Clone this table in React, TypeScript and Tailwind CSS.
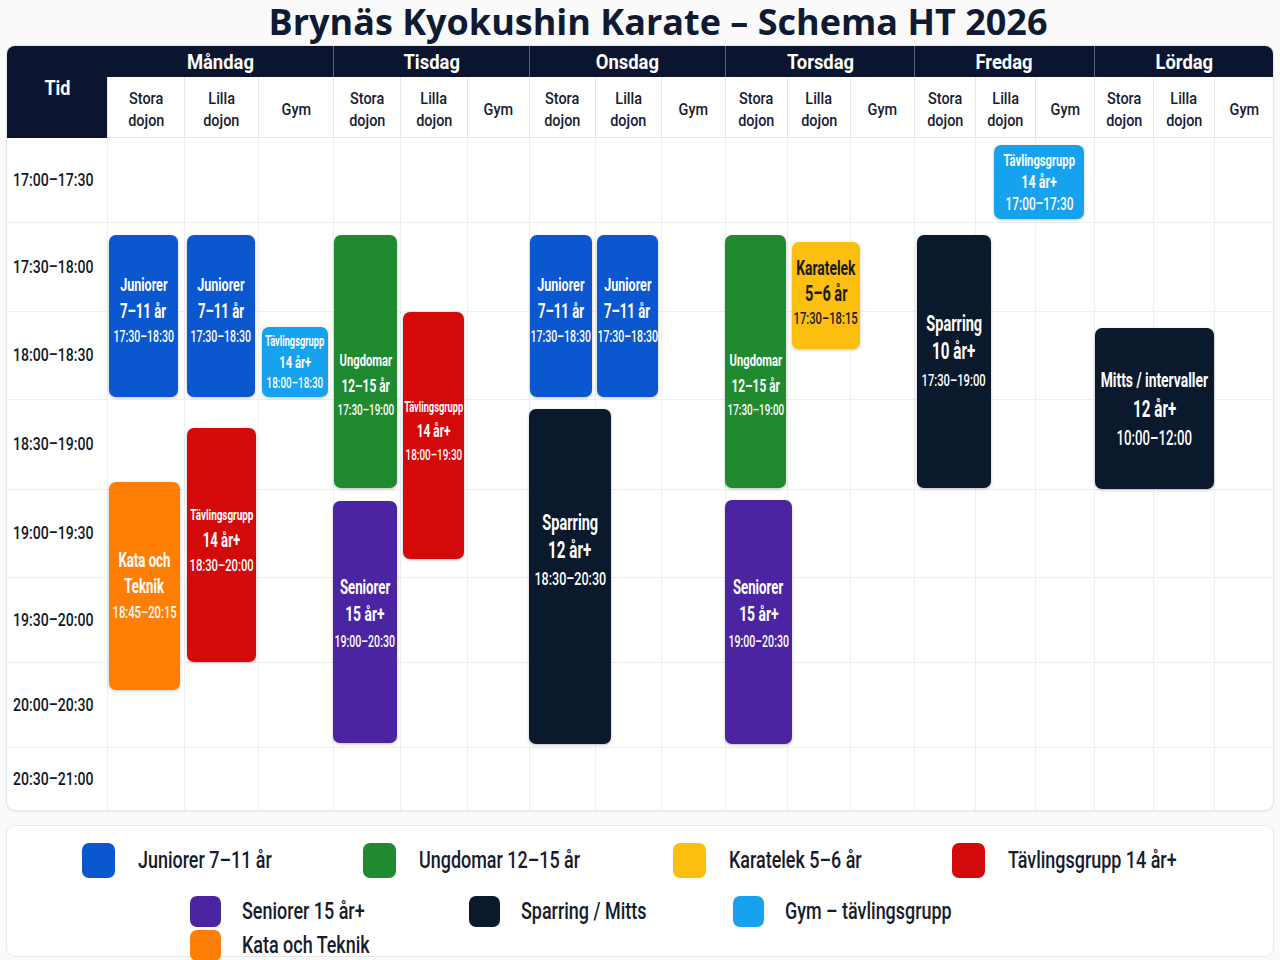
import React from "react";

const COLS =
  "grid grid-cols-[100px_77px_74px_75px_67px_67px_62px_66px_66px_64px_62px_63px_64px_61px_60px_59px_59px_61px_59px]";

const DAYS = ["Måndag", "Tisdag", "Onsdag", "Torsdag", "Fredag", "Lördag"];
const TIMES = [
  "17:00–17:30",
  "17:30–18:00",
  "18:00–18:30",
  "18:30–19:00",
  "19:00–19:30",
  "19:30–20:00",
  "20:00–20:30",
  "20:30–21:00",
];

type Line = [string, string];
type Ev = { pos: string; bg: string; color?: string; pad?: string; lines: Line[] };

const jun = (pos: string): Ev => ({
  pos,
  bg: "bg-[#0b57d0]",
  pad: "pb-[12px]",
  lines: [
    ["Juniorer", "text-[19px] font-bold leading-[27px]"],
    ["7–11 år", "text-[20px] font-bold leading-[26px]"],
    ["17:30–18:30", "text-[16px] font-medium leading-[26px]"],
  ],
});

const ung = (pos: string): Ev => ({
  pos,
  bg: "bg-[#1f8a30]",
  pad: "pt-[48px]",
  lines: [
    ["Ungdomar", "text-[17px] font-bold leading-[25px]"],
    ["12–15 år", "text-[18px] font-bold leading-[25px]"],
    ["17:30–19:00", "text-[15px] font-medium leading-[25px]"],
  ],
});

const sen = (pos: string): Ev => ({
  pos,
  bg: "bg-[#4b24a2]",
  pad: "pb-[16px]",
  lines: [
    ["Seniorer", "text-[20px] font-bold leading-[27px]"],
    ["15 år+", "text-[21px] font-bold leading-[27px]"],
    ["19:00–20:30", "text-[16px] font-medium leading-[27px]"],
  ],
});

const EVENTS: Ev[] = [
  jun("left-[102px] top-[97px] w-[69px] h-[162px]"),
  jun("left-[180px] top-[97px] w-[68px] h-[162px]"),
  jun("left-[523px] top-[97px] w-[62px] h-[162px]"),
  jun("left-[590px] top-[97px] w-[61px] h-[162px]"),
  {
    pos: "left-[255px] top-[189px] w-[66px] h-[70px]",
    bg: "bg-[#17a2f0]",
    lines: [
      ["Tävlingsgrupp", "text-[14px] font-bold leading-[21px]"],
      ["14 år+", "text-[17px] font-bold leading-[21px]"],
      ["18:00–18:30", "text-[15px] font-medium leading-[21px]"],
    ],
  },
  ung("left-[327px] top-[97px] w-[63px] h-[253px]"),
  {
    pos: "left-[396px] top-[174px] w-[61px] h-[247px]",
    bg: "bg-[#d40a0a]",
    pad: "pb-[8px]",
    lines: [
      ["Tävlingsgrupp", "text-[14px] font-bold leading-[23px]"],
      ["14 år+", "text-[18px] font-bold leading-[24px]"],
      ["18:00–19:30", "text-[15px] font-medium leading-[24px]"],
    ],
  },
  sen("left-[326px] top-[363px] w-[64px] h-[242px]"),
  {
    pos: "left-[522px] top-[271px] w-[82px] h-[335px]",
    bg: "bg-[#0a192c]",
    pad: "pb-[52px]",
    lines: [
      ["Sparring", "text-[22px] font-bold leading-[28px]"],
      ["12 år+", "text-[23px] font-bold leading-[28px]"],
      ["18:30–20:30", "text-[19px] font-medium leading-[28px]"],
    ],
  },
  ung("left-[718px] top-[97px] w-[61px] h-[253px]"),
  {
    pos: "left-[785px] top-[104px] w-[68px] h-[107px]",
    bg: "bg-[#fcbf0f]",
    color: "text-[#1a1a1a]",
    pad: "pb-[4px]",
    lines: [
      ["Karatelek", "text-[21px] font-bold leading-[25px]"],
      ["5–6 år", "text-[22px] font-bold leading-[25px]"],
      ["17:30–18:15", "text-[17px] font-medium leading-[25px]"],
    ],
  },
  sen("left-[718px] top-[362px] w-[67px] h-[244px]"),
  {
    pos: "left-[910px] top-[97px] w-[74px] h-[253px]",
    bg: "bg-[#0a192c]",
    pad: "pb-[20px]",
    lines: [
      ["Sparring", "text-[22px] font-bold leading-[28px]"],
      ["10 år+", "text-[23px] font-bold leading-[28px]"],
      ["17:30–19:00", "text-[17px] font-medium leading-[28px]"],
    ],
  },
  {
    pos: "left-[1088px] top-[190px] w-[119px] h-[161px]",
    bg: "bg-[#0a192c]",
    lines: [
      ["Mitts / intervaller", "text-[21px] font-bold leading-[29px]"],
      ["12 år+", "text-[23px] font-bold leading-[29px]"],
      ["10:00–12:00", "text-[20px] font-medium leading-[28px]"],
    ],
  },
  {
    pos: "left-[987px] top-[7px] w-[90px] h-[74px]",
    bg: "bg-[#17a2f0]",
    lines: [
      ["Tävlingsgrupp", "text-[17px] font-bold leading-[22px]"],
      ["14 år+", "text-[19px] font-bold leading-[22px]"],
      ["17:00–17:30", "text-[18px] font-medium leading-[22px]"],
    ],
  },
  {
    pos: "left-[102px] top-[344px] w-[71px] h-[208px]",
    bg: "bg-[#fe7e06]",
    lines: [
      ["Kata och", "text-[20px] font-bold leading-[26px]"],
      ["Teknik", "text-[20px] font-bold leading-[26px]"],
      ["18:45–20:15", "text-[17px] font-medium leading-[26px]"],
    ],
  },
  {
    pos: "left-[180px] top-[290px] w-[69px] h-[234px]",
    bg: "bg-[#d40a0a]",
    pad: "pb-[10px]",
    lines: [
      ["Tävlingsgrupp", "text-[15px] font-bold leading-[25px]"],
      ["14 år+", "text-[20px] font-bold leading-[25px]"],
      ["18:30–20:00", "text-[17px] font-medium leading-[25px]"],
    ],
  },
];

const LEGEND1: [string, string, string][] = [
  ["bg-[#0b57d0]", "Juniorer 7–11 år", "w-[281px]"],
  ["bg-[#1f8a30]", "Ungdomar 12–15 år", "w-[310px]"],
  ["bg-[#fcbf0f]", "Karatelek 5–6 år", "w-[279px]"],
  ["bg-[#d40a0a]", "Tävlingsgrupp 14 år+", "w-[260px]"],
];
const LEGEND2: [string, string, string][] = [
  ["bg-[#4b24a2]", "Seniorer 15 år+", "w-[279px]"],
  ["bg-[#0a192c]", "Sparring / Mitts", "w-[264px]"],
  ["bg-[#17a2f0]", "Gym – tävlingsgrupp", "w-[260px]"],
];

function Sub({ a, b }: { a: string; b?: string }) {
  return (
    <div className="flex flex-col items-center justify-center pt-[4px] border-l border-b border-[#e6e8ec] bg-white text-[#172033]">
      <span className="inline-block whitespace-nowrap scale-x-[0.85] text-[17px] font-medium leading-[22px]">{a}</span>
      {b && (
        <span className="inline-block whitespace-nowrap scale-x-[0.85] text-[17px] font-medium leading-[22px]">{b}</span>
      )}
    </div>
  );
}

function LegendItem({ sw, label, w, big }: { sw: string; label: string; w: string; big?: boolean }) {
  return (
    <div className={`flex items-center ${w} ${big ? "gap-[23px]" : "gap-[21px]"}`}>
      <div className={`${sw} ${big ? "w-[33px] h-[35px]" : "w-[31px] h-[31px]"} rounded-[7px] shrink-0`} />
      <span className="inline-block whitespace-nowrap origin-left scale-x-[0.78] text-[23px] font-medium leading-[24px] text-[#161b2c]">
        {label}
      </span>
    </div>
  );
}

export default function App() {
  return (
    <div className="w-[1280px] h-[960px] overflow-hidden bg-[#fafafb] font-['Roboto',sans-serif]">
      <div className="h-[46px] flex items-start justify-center pl-[36px] pt-[1px]">
        <h1 className="font-['Open_Sans',sans-serif] text-[36px] font-bold leading-[42px] text-[#111a33]">
          Brynäs Kyokushin Karate – Schema HT 2026
        </h1>
      </div>

      <div className="mx-[7px] w-[1266px] rounded-lg bg-white ring-1 ring-[#e3e6eb] shadow-sm overflow-hidden">
        <div className={`${COLS} grid-rows-[31px_61px]`}>
          <div className="row-span-2 bg-[#0b1530] flex items-center justify-center pb-[8px]">
            <span className="inline-block scale-x-[0.9] text-[20px] font-bold text-white">Tid</span>
          </div>
          {DAYS.map((d, i) => (
            <div
              key={d}
              className={`col-span-3 bg-[#0b1530] flex items-center justify-center ${i > 0 ? "border-l border-[#5a6380]" : ""}`}
            >
              <span className="inline-block whitespace-nowrap scale-x-[0.92] text-[20px] font-bold text-white">{d}</span>
            </div>
          ))}
          {DAYS.map((d) => (
            <React.Fragment key={d + "s"}>
              <Sub a="Stora" b="dojon" />
              <Sub a="Lilla" b="dojon" />
              <Sub a="Gym" />
            </React.Fragment>
          ))}
        </div>

        <div className="relative">
          <div className={`${COLS} grid-rows-[84px_89px_88px_90px_88px_85px_85px_63px]`}>
            {TIMES.map((t, r) => (
              <React.Fragment key={t}>
                <div className={`flex items-center pl-[6px] ${r > 0 ? "border-t border-[#eceef2]" : ""}`}>
                  <span className="inline-block whitespace-nowrap origin-left scale-x-[0.74] text-[19px] font-medium text-[#111827]">
                    {t}
                  </span>
                </div>
                {Array.from({ length: 18 }).map((_, c) => (
                  <div key={c} className={`border-l border-[#eceef2] ${r > 0 ? "border-t" : ""}`} />
                ))}
              </React.Fragment>
            ))}
          </div>

          {EVENTS.map((e, i) => (
            <div
              key={i}
              className={`absolute ${e.pos} ${e.bg} ${e.color ?? "text-white"} ${e.pad ?? ""} rounded-[7px] shadow-[0_1px_3px_rgba(0,0,0,0.25)] flex flex-col items-center justify-center`}
            >
              {e.lines.map(([t, c], j) => (
                <span key={j} className={`inline-block whitespace-nowrap scale-x-[0.66] ${c}`}>
                  {t}
                </span>
              ))}
            </div>
          ))}
        </div>
      </div>

      <div className="mt-[16px] mx-[7px] w-[1266px] h-[130px] rounded-lg bg-white ring-1 ring-[#e6e8ec] pt-[17px]">
        <div className="flex items-center pl-[75px]">
          {LEGEND1.map(([sw, l, w]) => (
            <LegendItem key={l} sw={sw} label={l} w={w} big />
          ))}
        </div>
        <div className="flex items-center pl-[183px] mt-[18px]">
          {LEGEND2.map(([sw, l, w]) => (
            <LegendItem key={l} sw={sw} label={l} w={w} />
          ))}
        </div>
        <div className="flex items-center pl-[183px] mt-[3px]">
          <LegendItem sw="bg-[#fe7e06]" label="Kata och Teknik" w="w-[260px]" />
        </div>
      </div>
    </div>
  );
}
